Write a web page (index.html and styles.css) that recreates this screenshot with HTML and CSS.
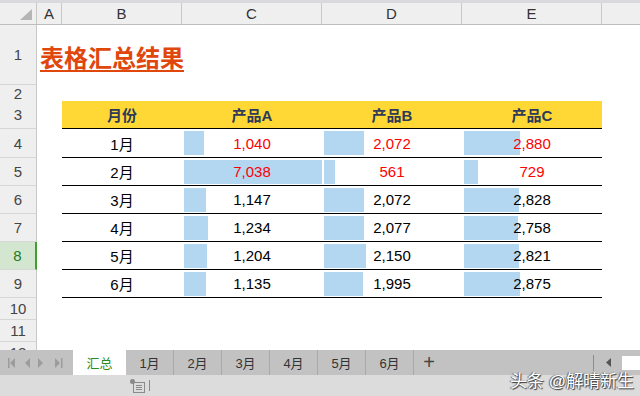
FILE: index.html
```html
<!DOCTYPE html>
<html lang="zh-CN">
<head>
<meta charset="UTF-8">
<title>表格汇总结果</title>
<link rel="stylesheet" href="styles.css">
</head>
<body>
<div class="sheet">
    <div class="line colhead">
        <div class="corner">
            <svg width="12" height="11" viewBox="0 0 12 11"><polygon points="12,0 12,11 0,11" fill="#b5b5b5"/></svg>
        </div>
        <div class="ch">A</div>
        <div class="ch">B</div>
        <div class="ch">C</div>
        <div class="ch">D</div>
        <div class="ch">E</div>
        <div class="ch last"></div>
    </div>

    <div class="rows">
        <div class="line r-title">
            <div class="rh">1</div>
            <div class="title-cell"><span class="title">表格汇总结果</span></div>
        </div>
        <div class="line r-gap">
            <div class="rh">2</div>
        </div>
        <div class="line r-std">
            <div class="rh">3</div>
            <div></div>
            <div class="th">月份</div>
            <div class="th">产品A</div>
            <div class="th">产品B</div>
            <div class="th">产品C</div>
        </div>
        <div class="line r-first">
            <div class="rh">4</div>
            <div></div>
            <div class="td">1月</div>
            <div class="td bar red" style="--w:20px">1,040</div>
            <div class="td bar red" style="--w:40px">2,072</div>
            <div class="td bar red" style="--w:56px">2,880</div>
        </div>
        <div class="line r-std">
            <div class="rh">5</div>
            <div></div>
            <div class="td">2月</div>
            <div class="td bar red" style="--w:138px">7,038</div>
            <div class="td bar red" style="--w:11px">561</div>
            <div class="td bar red" style="--w:14px">729</div>
        </div>
        <div class="line r-std">
            <div class="rh">6</div>
            <div></div>
            <div class="td">3月</div>
            <div class="td bar" style="--w:22px">1,147</div>
            <div class="td bar" style="--w:40px">2,072</div>
            <div class="td bar" style="--w:55px">2,828</div>
        </div>
        <div class="line r-std">
            <div class="rh">7</div>
            <div></div>
            <div class="td">4月</div>
            <div class="td bar" style="--w:24px">1,234</div>
            <div class="td bar" style="--w:40px">2,077</div>
            <div class="td bar" style="--w:54px">2,758</div>
        </div>
        <div class="line r-std">
            <div class="rh active">8</div>
            <div></div>
            <div class="td">5月</div>
            <div class="td bar" style="--w:23px">1,204</div>
            <div class="td bar" style="--w:42px">2,150</div>
            <div class="td bar" style="--w:55px">2,821</div>
        </div>
        <div class="line r-std">
            <div class="rh">9</div>
            <div></div>
            <div class="td">6月</div>
            <div class="td bar" style="--w:22px">1,135</div>
            <div class="td bar" style="--w:39px">1,995</div>
            <div class="td bar" style="--w:56px">2,875</div>
        </div>
        <div class="line r-low">
            <div class="rh">10</div>
        </div>
        <div class="line r-low">
            <div class="rh">11</div>
        </div>
        <div class="line r-low">
            <div class="rh">12</div>
        </div>
    </div>

    <div class="tabbar">
        <div class="nav">
            <svg width="60" height="12" viewBox="0 0 60 12">
                <rect x="0" y="1" width="1.5" height="10" fill="#9c9c9c"/>
                <polygon points="7,1 7,11 2,6" fill="#9c9c9c"/>
                <polygon points="22,1 22,11 17,6" fill="#9c9c9c"/>
                <polygon points="30,1 30,11 35,6" fill="#9c9c9c"/>
                <polygon points="47,1 47,11 52,6" fill="#9c9c9c"/>
                <rect x="53" y="1" width="1.5" height="10" fill="#9c9c9c"/>
            </svg>
        </div>
        <div class="tab current">汇总</div>
        <div class="tab">1月</div>
        <div class="tab">2月</div>
        <div class="tab">3月</div>
        <div class="tab">4月</div>
        <div class="tab">5月</div>
        <div class="tab">6月</div>
        <div class="add">+</div>
        <div class="scroll">
            <span class="sep"></span>
            <svg width="6" height="9" viewBox="0 0 6 9"><polygon points="5,0 5,9 0,4.5" fill="#555"/></svg>
            <span class="track"></span>
        </div>
    </div>

    <div class="status">
        <svg class="sicon" width="16" height="14" viewBox="0 0 16 14">
            <circle cx="2.5" cy="2.5" r="2.5" fill="#8a8a8a"/>
            <rect x="3.5" y="3.5" width="11" height="10" fill="none" stroke="#8a8a8a"/>
            <line x1="6" y1="6.5" x2="12" y2="6.5" stroke="#8a8a8a"/>
            <line x1="6" y1="8.5" x2="12" y2="8.5" stroke="#8a8a8a"/>
            <line x1="6" y1="10.5" x2="12" y2="10.5" stroke="#8a8a8a"/>
        </svg>
        <span class="vline"></span>
    </div>

    <div class="mark">头条 @解晴新生</div>
</div>
</body>
</html>
```

FILE: styles.css
```css
body {
    margin: 0;
    font-family: "Liberation Sans", "Noto Sans CJK SC", sans-serif;
    background: #fff;
}

.sheet {
    width: 640px;
    height: 396px;
    overflow: hidden;
    position: relative;
    display: flex;
    flex-direction: column;
}

.line {
    display: grid;
    grid-template-columns: 37px 25px 120px 140px 140px 140px 1fr;
}

/* column letters */
.colhead {
    border-top: 3px solid #dadade;
    border-bottom: 1px solid #bdbdbd;
    background: #efefef;
    height: 21px;
}
.corner {
    border-right: 1px solid #c8c8c8;
    display: flex;
    align-items: flex-end;
    justify-content: flex-end;
    padding: 0 4px 4px 0;
}
.ch {
    border-right: 1px solid #c8c8c8;
    text-align: center;
    font-size: 15px;
    line-height: 21px;
    color: #333;
}
.ch.last {
    border-right: none;
}

.rows {
    height: 325px;
    overflow: hidden;
}

.r-title { height: 60px; }
.r-gap { height: 16px; }
.r-std { height: 28px; }
.r-first { height: 29px; }
.r-low { height: 22px; }

.rh {
    background: #efefef;
    border-right: 1px solid #c8c8c8;
    border-bottom: 1px solid #d6d6d6;
    display: flex;
    align-items: center;
    justify-content: center;
    font-size: 15px;
    color: #444;
}
.rh.active {
    background: #d3e6d0;
    border-right: 2px solid #3fa12b;
    color: #217a1c;
}

.title-cell {
    grid-column: 2 / 8;
    display: flex;
    align-items: center;
    padding-left: 3px;
}
.title {
    font-size: 24px;
    font-weight: bold;
    color: #e0470c;
    text-decoration: underline;
    text-decoration-thickness: 2px;
    text-underline-offset: 3px;
    padding-top: 2px;
}

.th {
    background: #ffd836;
    border-bottom: 1px solid #000;
    font-size: 15px;
    font-weight: bold;
    color: #2e3a57;
    display: flex;
    align-items: center;
    justify-content: center;
}

.td {
    border-bottom: 1px solid #000;
    font-size: 15px;
    color: #000;
    display: flex;
    align-items: center;
    justify-content: center;
}
.td.bar {
    background: linear-gradient(#b3d6f1, #b3d6f1) no-repeat 2px 2px / var(--w) 24px;
}
.td.red {
    color: #ff0000;
}

/* sheet tabs */
.tabbar {
    height: 25px;
    background: #c2c2c2;
    display: flex;
    align-items: stretch;
    font-size: 13px;
    color: #333;
}
.nav {
    width: 65px;
    padding-left: 8px;
    display: flex;
    align-items: center;
}
.tab {
    width: 47px;
    border-right: 1px solid #a9a9a9;
    display: flex;
    align-items: center;
    justify-content: center;
}
.tab.current {
    width: 53px;
    background: #fff;
    color: #2a8c1e;
    border-right: none;
}
.add {
    width: 30px;
    display: flex;
    align-items: center;
    justify-content: center;
    font-size: 20px;
    color: #444;
}
.scroll {
    margin-left: auto;
    display: flex;
    align-items: center;
}
.sep {
    width: 1px;
    height: 16px;
    background: #8c8c8c;
    margin-right: 12px;
}
.track {
    width: 18px;
    height: 14px;
    background: #fff;
    margin-left: 10px;
}

/* status bar */
.status {
    flex: 1;
    background: #dcdcdc;
    display: flex;
    align-items: center;
    padding-left: 130px;
}
.vline {
    width: 1px;
    height: 11px;
    background: #8a8a8a;
    margin-left: 3px;
}

.mark {
    position: absolute;
    left: 510px;
    top: 367px;
    font-size: 17px;
    color: #fff;
    text-shadow: 1px 1px 1px #333, -1px 0 1px #555;
    letter-spacing: 0;
}
```
